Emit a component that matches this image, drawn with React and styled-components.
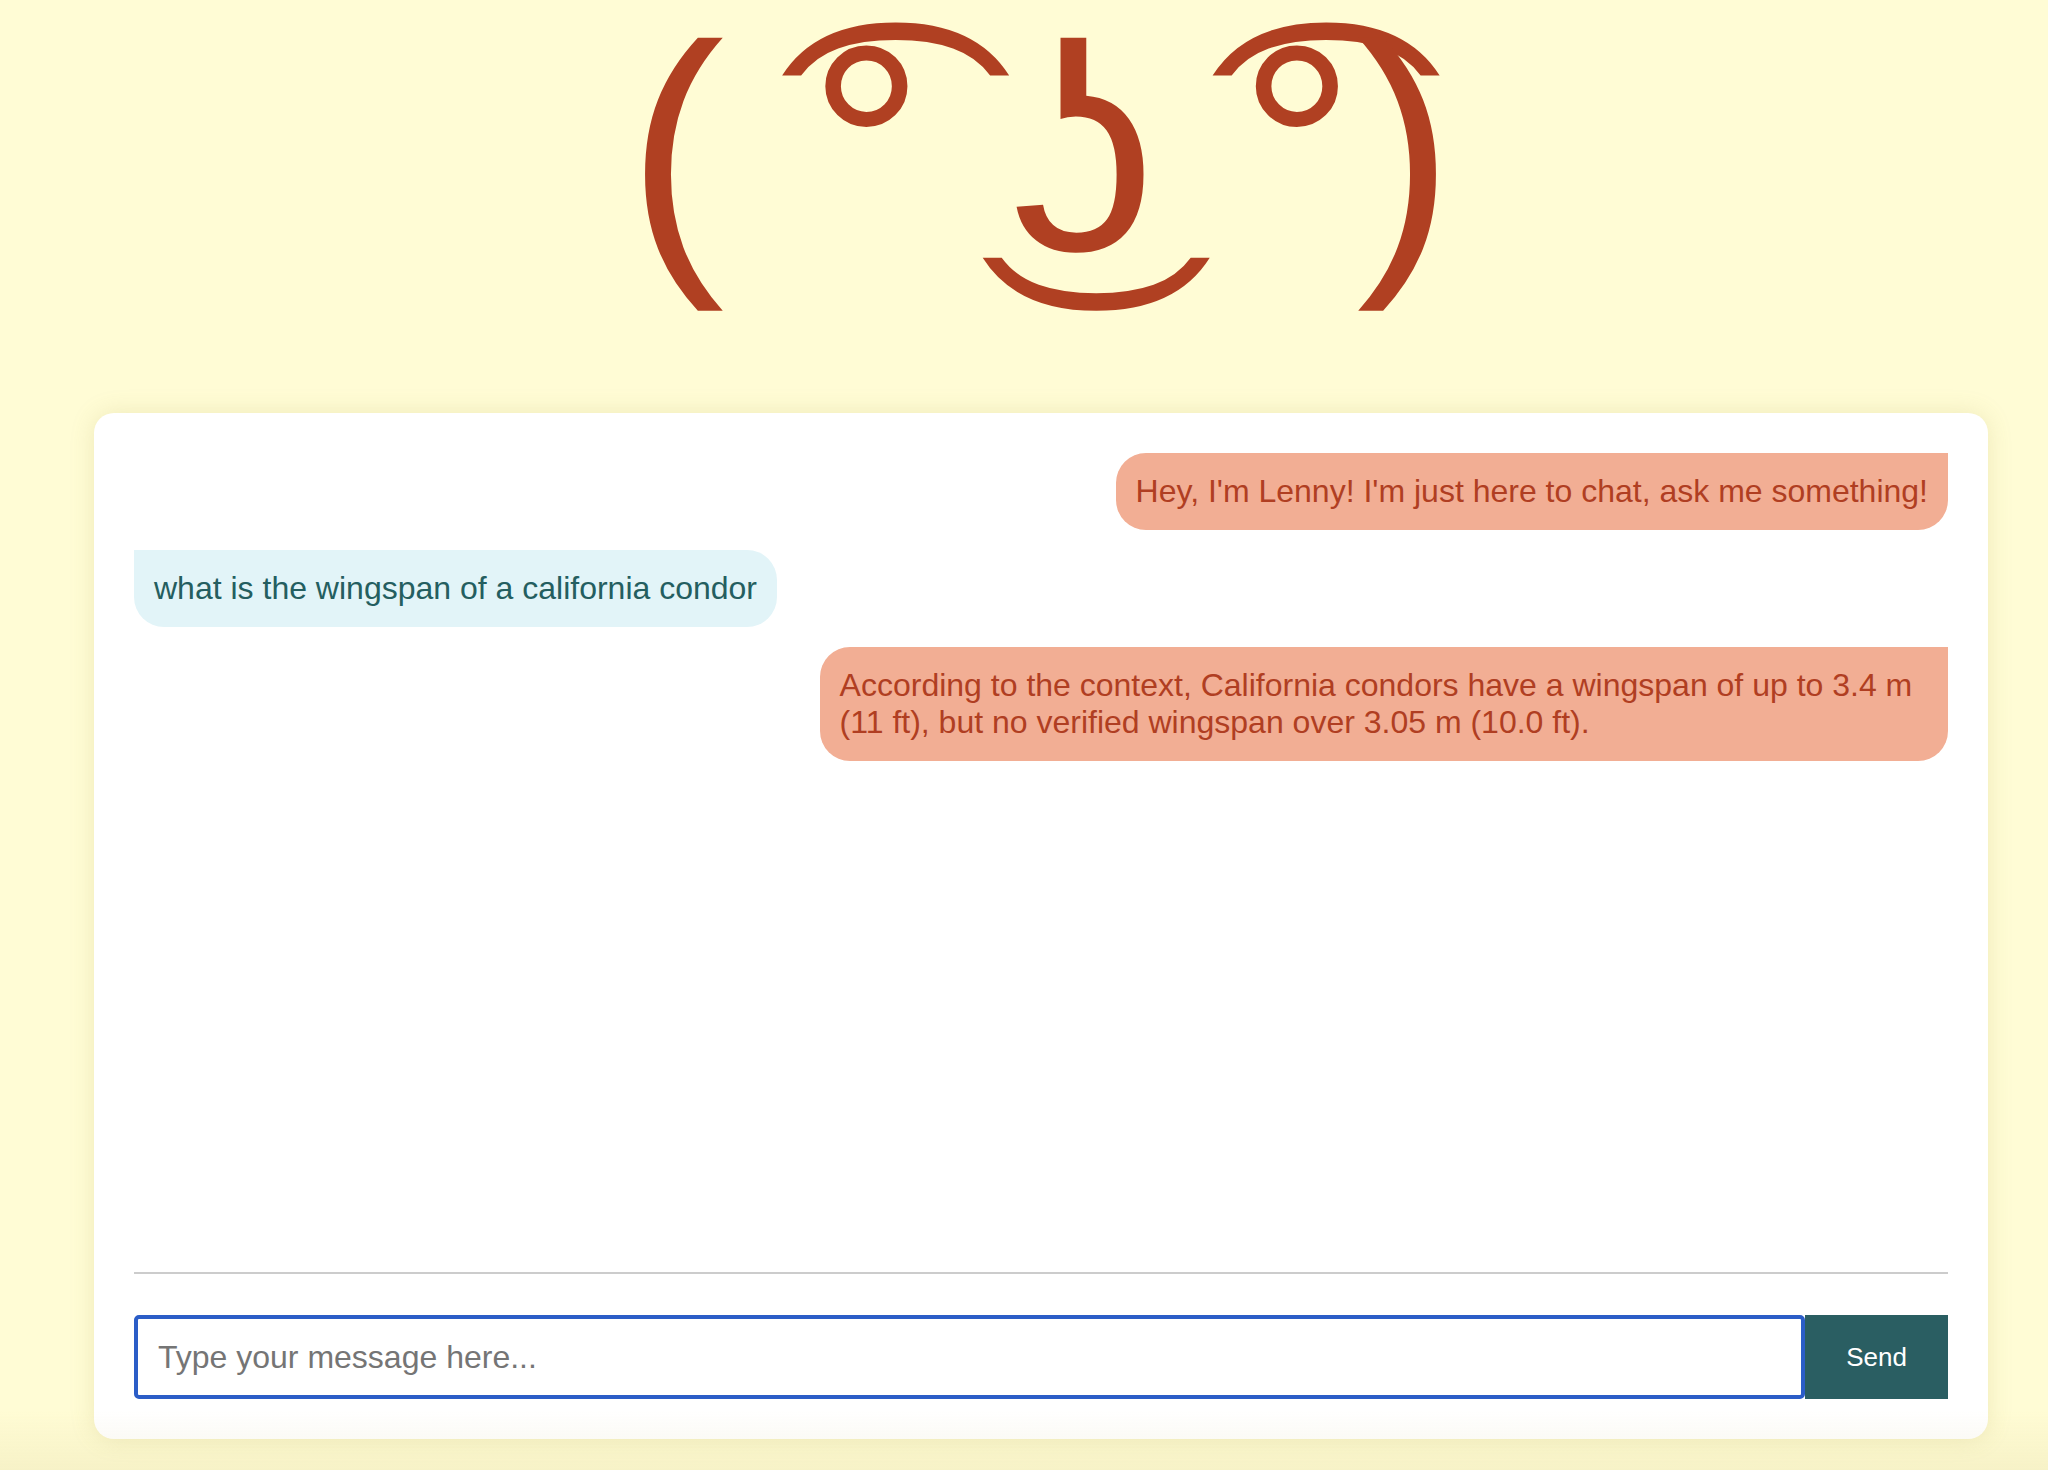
import React, { useState } from "react";
import styled, { createGlobalStyle } from "styled-components";

const GlobalStyle = createGlobalStyle`
  html, body {
    margin: 0;
    padding: 0;
    background: #fffcd5;
    font-family: "Liberation Sans", Arial, sans-serif;
  }
`;

const messages = [
  { from: "bot", text: "Hey, I'm Lenny! I'm just here to chat, ask me something!" },
  { from: "user", text: "what is the wingspan of a california condor" },
  {
    from: "bot",
    text:
      "According to the context, California condors have a wingspan of up to 3.4 m (11 ft), but no verified wingspan over 3.05 m (10.0 ft).",
  },
];

function App() {
  const [draft, setDraft] = useState("");

  return (
    <Page>
      <GlobalStyle />
      <Face>( ͡° ͜ʖ ͡°)</Face>
      <ChatCard>
        <MessageList>
          {messages.map((m, i) => (
            <Bubble key={i} from={m.from}>
              {m.text}
            </Bubble>
          ))}
        </MessageList>
        <InputRow>
          <MessageInput
            placeholder="Type your message here..."
            value={draft}
            onChange={(e) => setDraft(e.target.value)}
          />
          <SendButton>Send</SendButton>
        </InputRow>
      </ChatCard>
      <BottomFade />
    </Page>
  );
}

export default App;

const Page = styled.div`
  display: flex;
  flex-direction: column;
  align-items: stretch;
  padding: 0 60px 0 94px;
  min-height: 1470px;
  box-sizing: border-box;
`;

const Face = styled.h1`
  margin: 0;
  height: 413px;
  box-sizing: border-box;
  padding-top: 0;
  text-align: center;
  font-family: "Liberation Sans", Arial, sans-serif;
  font-weight: normal;
  font-size: 293px;
  letter-spacing: 1px;
  line-height: 297px;
  color: #b04022;
  white-space: nowrap;
`;

const ChatCard = styled.div`
  display: flex;
  flex-direction: column;
  background: #ffffff;
  border-radius: 20px;
  padding: 40px;
  box-shadow: 0 0 24px rgba(160, 150, 60, 0.18);
`;

const MessageList = styled.div`
  display: flex;
  flex-direction: column;
  gap: 20px;
  height: 799px;
  margin-bottom: 20px;
  overflow-y: auto;
`;

const Bubble = styled.div`
  align-self: ${(p) => (p.from === "bot" ? "flex-end" : "flex-start")};
  max-width: 60%;
  padding: 20px;
  font-size: 32px;
  line-height: 37px;
  color: ${(p) => (p.from === "bot" ? "#b03e22" : "#245e60")};
  background: ${(p) => (p.from === "bot" ? "#f2ae94" : "#e2f4f8")};
  border-radius: ${(p) =>
    p.from === "bot" ? "30px 0 30px 30px" : "0 30px 30px 30px"};
`;

const InputRow = styled.div`
  display: flex;
  border-top: 2px solid #cccccc;
  padding-top: 41px;
`;

const MessageInput = styled.input`
  flex: 1;
  height: 84px;
  box-sizing: border-box;
  padding: 0 20px;
  border: 4px solid #2b5dc7;
  border-radius: 5px;
  font-family: "Liberation Sans", Arial, sans-serif;
  font-size: 32px;
  color: #333;
  outline: none;
  &::placeholder {
    color: #757575;
  }
`;

const SendButton = styled.button`
  width: 143px;
  height: 84px;
  border: none;
  background: #2a5e62;
  color: #ffffff;
  font-family: "Liberation Sans", Arial, sans-serif;
  font-size: 26px;
  cursor: pointer;
`;

const BottomFade = styled.div`
  position: fixed;
  left: 0;
  right: 0;
  bottom: 0;
  height: 60px;
  pointer-events: none;
  background: linear-gradient(rgba(200, 190, 120, 0), rgba(200, 190, 120, 0.15));
`;
